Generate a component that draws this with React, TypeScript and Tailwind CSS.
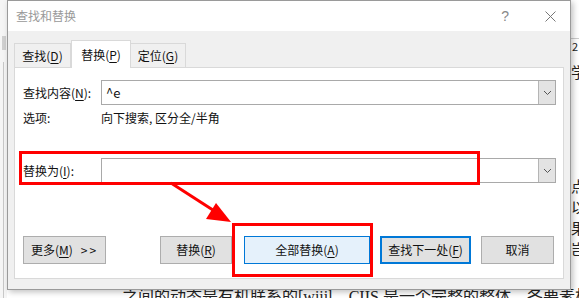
import React from "react";

const F = { fontFamily: '"Noto Sans CJK SC", "Noto Sans", sans-serif' };

function U({ c }: { c: string }) {
  return <span className="underline underline-offset-2">{c}</span>;
}

function Combo({ text }: { text?: string }) {
  return (
    <div className="flex h-[25px] w-[455px] border border-[#a9a9a9] bg-white">
      <div className="flex flex-1 items-center pl-[4px] text-[13px] text-[#111]">{text}</div>
      <div className="flex w-[17px] items-center justify-center border-l border-[#b5b5b5] bg-[#e3e3e3]">
        <svg width="9" height="6" viewBox="0 0 9 6">
          <path d="M1 1 L4.5 4.5 L8 1" fill="none" stroke="#555" strokeWidth="1" />
        </svg>
      </div>
    </div>
  );
}

function Btn({ w, children, cls }: { w: string; children: React.ReactNode; cls?: string }) {
  return (
    <div
      className={`flex h-[28px] items-center justify-center text-[12px] text-[#111] ${w} ${
        cls ?? "border border-[#adadad] bg-[#e1e1e1]"
      }`}
    >
      {children}
    </div>
  );
}

export default function App() {
  return (
    <div className="relative h-[298px] w-[579px] overflow-hidden bg-white" style={F}>
      {/* background document */}
      <div className="absolute left-0 top-0 h-[298px] w-[7px] bg-[#f5f5f5]">
        <div className="ml-[2px] mt-[36px] h-[14px] w-[4px] bg-[#d0d0d0]" />
        <div className="ml-[3px] mt-[12px] h-[240px] w-px bg-[#c8c8c8]" />
      </div>
      <div className="absolute right-0 top-0 flex h-[298px] w-[8px] flex-col bg-white text-[15px] leading-[21px] text-[#222]" style={{ fontFamily: '"Noto Sans CJK SC", serif' }}>
        <div className="mt-[38px] h-px w-[8px] bg-[#ccc]" />
        <div className="pl-[1px] text-[11px] leading-[14px]">2</div>
        <div className="mt-[8px] h-[20px]">学</div>
        <div className="mt-[94px]">点</div>
        <div>以</div>
        <div>果</div>
        <div>岂</div>
      </div>
      <div
        className="absolute left-[122px] top-[285px] whitespace-nowrap text-[16px] text-[#222]"
        style={{ fontFamily: '"Liberation Serif", "Noto Sans CJK SC", serif' }}
      >
        之间的动态是有机联系的[wiiil。CIIS 是一个完整的整体，各要素相互联系
      </div>

      {/* dialog window */}
      <div className="absolute left-[7px] top-0 flex h-[290px] w-[564px] flex-col border border-[#9a9a9a] bg-[#f0f0f0] shadow-[2px_2px_6px_rgba(0,0,0,0.25)]">
        <div className="flex h-[30px] items-center bg-white pl-[8px] pr-[14px]">
          <span className="text-[12px] text-[#999]">查找和替换</span>
          <span className="ml-auto text-[14px] text-[#888]" style={{ fontFamily: '"Liberation Sans", sans-serif' }}>?</span>
          <svg className="ml-[36px]" width="11" height="11" viewBox="0 0 11 11">
            <path d="M0.5 0.5 L10.5 10.5 M10.5 0.5 L0.5 10.5" stroke="#777" strokeWidth="1" />
          </svg>
        </div>
        {/* tabs */}
        <div className="flex items-end pl-[6px] pt-[9px]">
          <div className="flex h-[24px] w-[57px] items-center justify-center border border-b-0 border-[#d9d9d9] bg-[#f0f0f0] text-[12px] text-[#111]">
            查找(<U c="D" />)
          </div>
          <div className="relative z-10 -mb-px flex h-[28px] w-[60px] items-center justify-center border border-b-0 border-[#d9d9d9] bg-white text-[12px] text-[#111]">
            替换(<U c="P" />)
          </div>
          <div className="flex h-[24px] w-[55px] items-center justify-center border border-b-0 border-l-0 border-[#d9d9d9] bg-[#f0f0f0] text-[12px] text-[#111]">
            定位(<U c="G" />)
          </div>
        </div>
        {/* panel */}
        <div className="ml-[6px] flex h-[212px] w-[550px] flex-col border border-[#d9d9d9] bg-white text-[12px] text-[#111]">
          <div className="mt-[12px] flex items-center">
            <div className="w-[86px] pl-[8px]">
              查找内容(<U c="N" />):
            </div>
            <Combo text="^e" />
          </div>
          <div className="mt-[2px] flex h-[22px] items-center">
            <div className="w-[86px] pl-[8px]">选项:</div>
            <div>向下搜索, 区分全/半角</div>
          </div>
          <div className="mt-[29px] flex items-center">
            <div className="w-[86px] pl-[8px]">
              替换为(<U c="I" />):
            </div>
            <Combo />
          </div>
          <div className="mt-[53px] flex items-center">
            <div className="ml-[8px]">
              <Btn w="w-[83px]">
                更多(<U c="M" />)<span className="ml-[8px] tracking-[2px]">&gt;&gt;</span>
              </Btn>
            </div>
            <div className="ml-[54px]">
              <Btn w="w-[72px]">
                替换(<U c="R" />)
              </Btn>
            </div>
            <div className="ml-[12px]">
              <Btn w="w-[126px]" cls="border border-[#0078d7] bg-[#e5f1fb]">
                全部替换(<U c="A" />)
              </Btn>
            </div>
            <div className="ml-[10px]">
              <Btn w="w-[91px]" cls="border-2 border-[#0078d7] bg-[#e1e1e1]">
                查找下一处(<U c="F" />)
              </Btn>
            </div>
            <div className="ml-[10px]">
              <Btn w="w-[73px]">取消</Btn>
            </div>
          </div>
        </div>
      </div>

      {/* red annotations */}
      <div className="absolute left-[19px] top-[151px] h-[34px] w-[461px] border-[3px] border-[#ff0000]" />
      <div className="absolute left-[232px] top-[223px] h-[54px] w-[141px] border-[3px] border-[#ff0000]" />
      <svg className="absolute left-0 top-0" width="579" height="298" viewBox="0 0 579 298">
        <line x1="171" y1="183" x2="216" y2="212" stroke="#ff0000" strokeWidth="3" />
        <polygon points="231,222 206,219 216,203" fill="#ff0000" />
      </svg>
    </div>
  );
}
